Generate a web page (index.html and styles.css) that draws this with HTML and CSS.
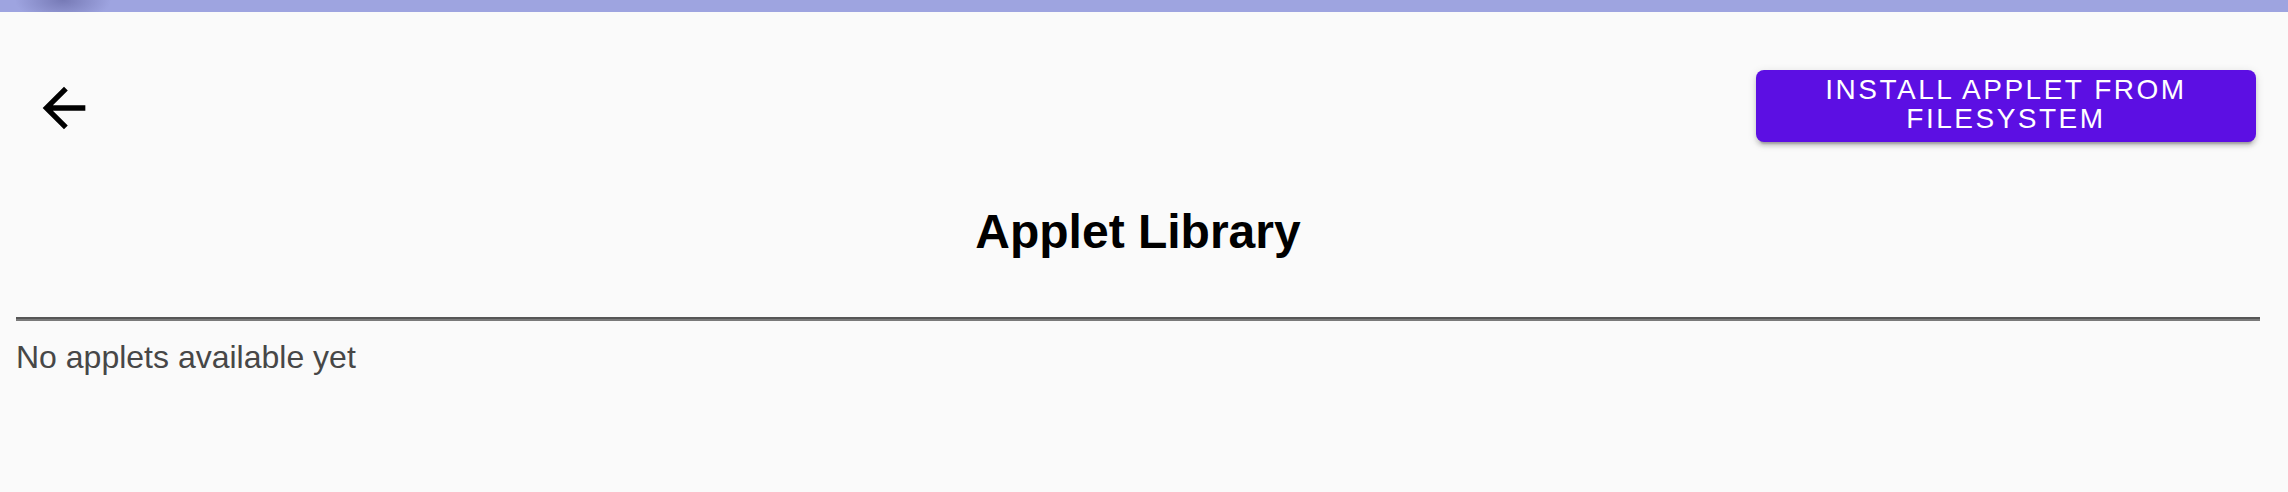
FILE: index.html
```html
<!DOCTYPE html>
<html lang="en">
<head>
<meta charset="utf-8">
<title>Applet Library</title>
<link rel="stylesheet" href="styles.css">
</head>
<body>
<div class="topbar"></div>
<div class="page">
  <header class="header">
    <button class="icon-btn" aria-label="Back">
      <svg viewBox="0 0 24 24" width="64" height="64"><path d="M20 11H7.83l5.59-5.59L12 4l-8 8 8 8 1.41-1.41L7.83 13H20v-2z" fill="#000"/></svg>
    </button>
    <button class="install-btn">Install applet from filesystem</button>
  </header>
  <h1 class="title">Applet Library</h1>
  <hr class="divider">
  <p class="empty">No applets available yet</p>
</div>
</body>
</html>
```
FILE: styles.css
```css
html, body {
  margin: 0;
  padding: 0;
  background: #fafafa;
  font-family: "Liberation Sans", Arial, Helvetica, sans-serif;
}
.topbar {
  height: 12px;
  background-color: #9ea4e0;
  background-image: radial-gradient(ellipse 48px 22px at 63px 0, rgba(70, 70, 130, 0.45), rgba(70, 70, 130, 0) 100%);
}
.page {
  padding: 48px 28px 0 16px;
}
.header {
  display: flex;
  justify-content: space-between;
  align-items: flex-start;
  padding-right: 4px;
}
.icon-btn {
  display: flex;
  padding: 16px;
  margin: 0;
  border: 0;
  background: transparent;
  border-radius: 50%;
}
.install-btn {
  margin-top: 10px;
  width: 500px;
  min-height: 72px;
  padding: 5px 32px 9px;
  border: 0;
  border-radius: 8px;
  background: #5c0fe3;
  color: #fff;
  font-family: "Liberation Sans", Arial, Helvetica, sans-serif;
  font-size: 28px;
  line-height: 29px;
  font-weight: 400;
  letter-spacing: 0.0892857em;
  text-transform: uppercase;
  box-shadow: 0 6px 2px -4px rgba(0,0,0,.2), 0 4px 4px 0 rgba(0,0,0,.14), 0 2px 10px 0 rgba(0,0,0,.12);
}
.title {
  margin: 48px 0 57px;
  font-size: 48px;
  line-height: 56px;
  font-weight: 700;
  text-align: center;
  color: #000;
}
.divider {
  margin: 0;
  height: 0;
  border: 0;
  border-top: 2px solid #565656;
  border-bottom: 2px solid #7a7a7a;
}
.empty {
  margin: 16px 0 0;
  font-size: 32px;
  line-height: 40px;
  color: #474747;
}
```
